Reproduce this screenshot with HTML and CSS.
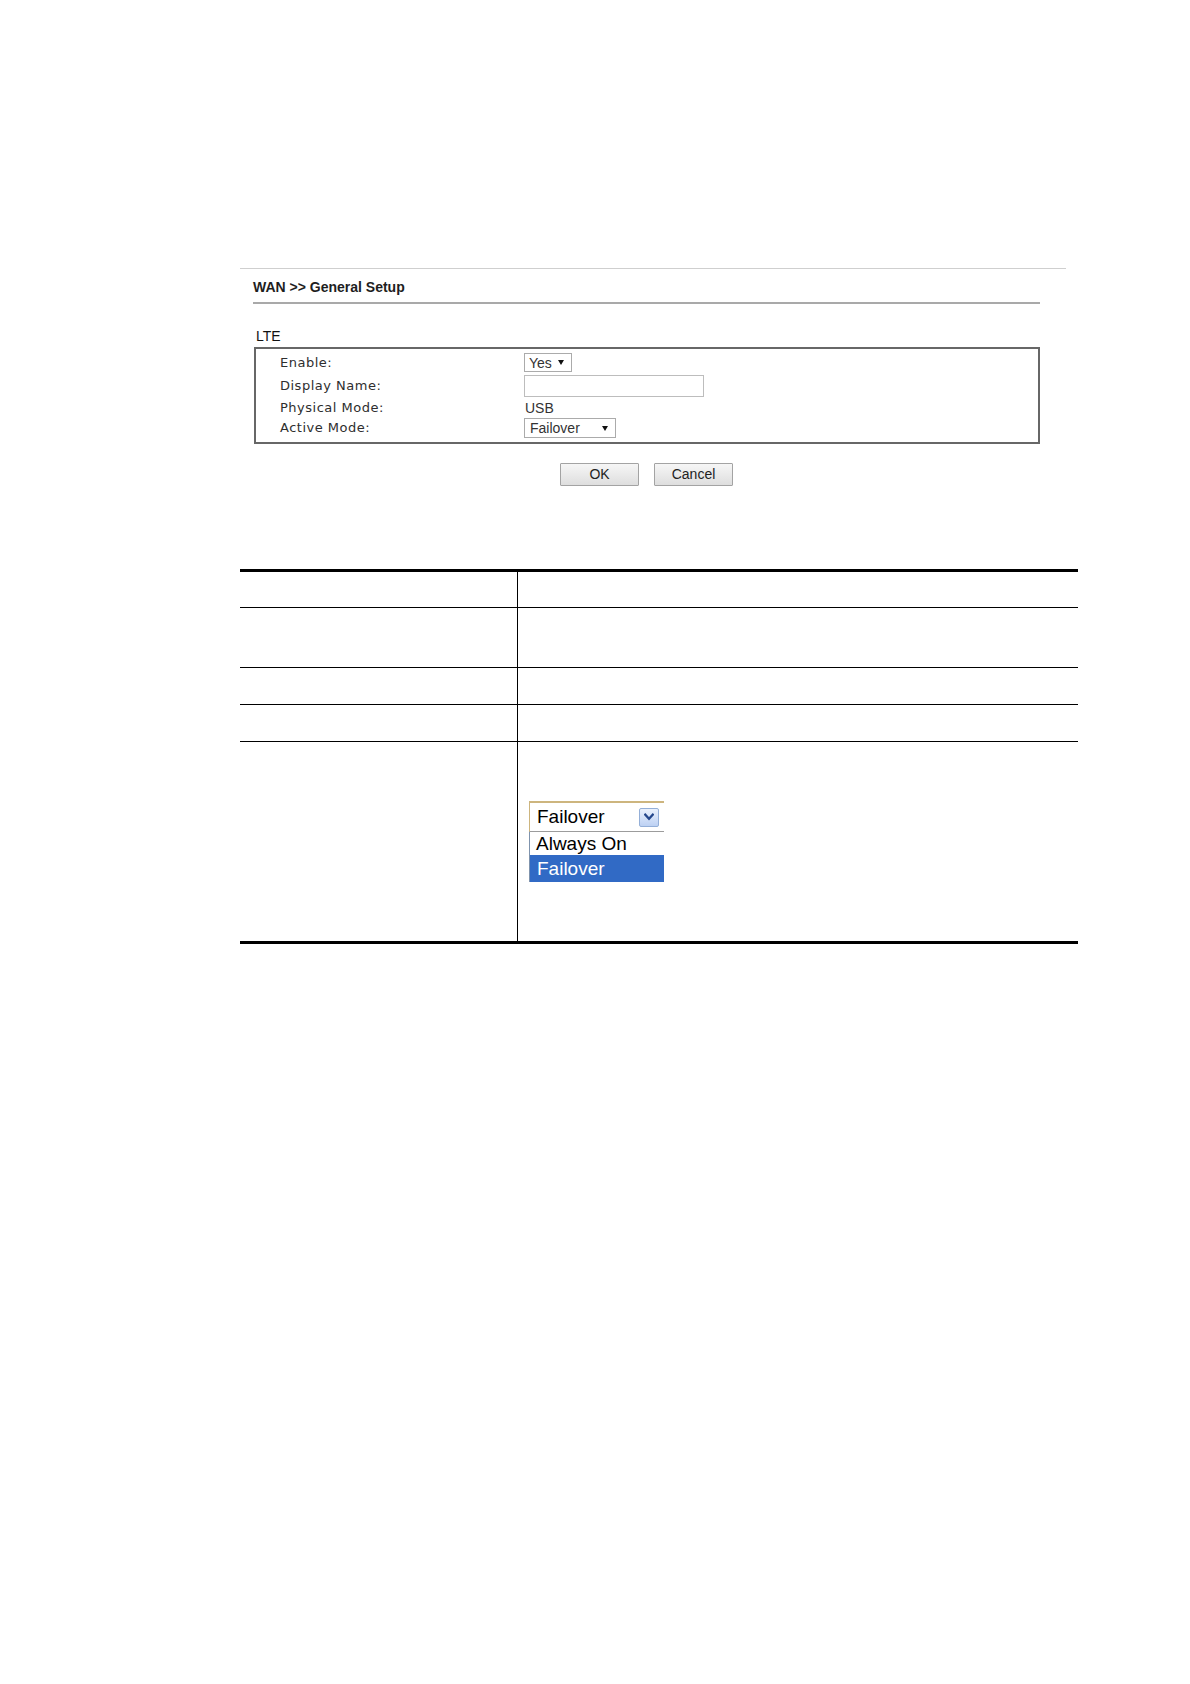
FILE: index.html
```html
<!DOCTYPE html>
<html lang="en">
<head>
<meta charset="utf-8">
<title>WAN General Setup - LTE</title>
<link rel="stylesheet" href="styles.css">
</head>
<body>
<div class="page">
  <div class="topline"></div>
  <div class="panel">
    <div class="title">WAN &gt;&gt; General Setup</div>
    <div class="section-label">LTE</div>
    <div class="box">
      <div class="row r1">
        <span class="lbl">Enable:</span>
        <span class="sel sel-yes"><span>Yes</span><i class="tri"></i></span>
      </div>
      <div class="row r2">
        <span class="lbl">Display Name:</span>
        <span class="txt-input"></span>
      </div>
      <div class="row r3">
        <span class="lbl">Physical Mode:</span>
        <span class="val">USB</span>
      </div>
      <div class="row r4">
        <span class="lbl">Active Mode:</span>
        <span class="sel sel-fail"><span>Failover</span><i class="tri"></i></span>
      </div>
    </div>
    <div class="buttons">
      <button class="btn" type="button">OK</button>
      <button class="btn" type="button">Cancel</button>
    </div>
  </div>

  <div class="ref-table">
    <div class="trow h1"><div class="cell-l"></div><div class="cell-r"></div></div>
    <div class="trow h2"><div class="cell-l"></div><div class="cell-r"></div></div>
    <div class="trow h3"><div class="cell-l"></div><div class="cell-r"></div></div>
    <div class="trow h4"><div class="cell-l"></div><div class="cell-r"></div></div>
    <div class="trow h5">
      <div class="cell-l"></div>
      <div class="cell-r dd-cell">
        <div class="dd">
          <div class="dd-sel">
            <span>Failover</span>
            <span class="dd-btn">
              <svg width="10" height="8" viewBox="0 0 10 8"><path d="M1.2 1.6 L5 5.8 L8.8 1.6" fill="none" stroke="#24478c" stroke-width="2.2" stroke-linecap="square"/></svg>
            </span>
          </div>
          <div class="dd-list">
            <div class="dd-opt">Always On</div>
            <div class="dd-opt hl">Failover</div>
          </div>
        </div>
      </div>
    </div>
  </div>
</div>
</body>
</html>
```

FILE: styles.css
```css
html, body {
  margin: 0;
  padding: 0;
  background: #ffffff;
}

body {
  font-family: "Liberation Sans", Arial, sans-serif;
  color: #222;
}

.page {
  width: 1190px;
  min-height: 1684px;
  padding-top: 268px;
  box-sizing: border-box;
}

.topline {
  margin-left: 240px;
  width: 826px;
  height: 0;
  border-top: 1px solid #cfcfcf;
}

.panel {
  margin-left: 253px;
  width: 787px;
}

.title {
  padding: 10px 0 7px 0;
  line-height: 16px;
  font-size: 14px;
  font-weight: bold;
  color: #1e1e1e;
  border-bottom: 2px solid #a9a9a9;
}

.section-label {
  margin-top: 24px;
  padding-left: 3px;
  line-height: 16px;
  font-size: 14px;
  color: #111;
}

.box {
  margin-top: 3px;
  margin-left: 1px;
  width: 786px;
  box-sizing: border-box;
  border: 2px solid #676767;
  padding: 4px 0 4px 24px;
}

.row {
  display: grid;
  grid-template-columns: 244px auto;
  justify-content: start;
  align-items: center;
}

.r1 { height: 19px; }
.r2 { height: 22px; margin-top: 3px; }
.r3 { height: 21px; }
.r4 { height: 20px; }

.lbl {
  font-family: "DejaVu Sans", Verdana, sans-serif;
  font-size: 13px;
  letter-spacing: 0.5px;
  color: #2e2e2e;
  line-height: 16px;
}

.sel {
  display: flex;
  align-items: center;
  justify-content: space-between;
  box-sizing: border-box;
  border: 1px solid #ababab;
  background: #fff;
  font-size: 14px;
  color: #333;
  line-height: 16px;
}

.sel-yes {
  width: 48px;
  height: 19px;
  padding: 0 7px 0 4px;
}

.sel-fail {
  width: 92px;
  height: 20px;
  padding: 0 7px 0 5px;
}

.tri {
  display: block;
  width: 0;
  height: 0;
  border-left: 3px solid transparent;
  border-right: 3px solid transparent;
  border-top: 5px solid #111;
}

.txt-input {
  display: block;
  width: 180px;
  height: 22px;
  box-sizing: border-box;
  border: 1px solid #bdbdbd;
  background: #fff;
}

.val {
  font-size: 14px;
  color: #333;
  padding-left: 1px;
  line-height: 16px;
}

.buttons {
  margin-top: 19px;
  display: flex;
  justify-content: center;
  gap: 15px;
}

.btn {
  width: 79px;
  height: 23px;
  box-sizing: border-box;
  margin: 0;
  padding: 0;
  border: 1px solid #a3a3a3;
  border-radius: 1px;
  background: linear-gradient(#f6f6f6, #dedede);
  font-family: "Liberation Sans", Arial, sans-serif;
  font-size: 14px;
  color: #222;
  line-height: 21px;
}

.ref-table {
  margin-top: 83px;
  margin-left: 240px;
  width: 838px;
  border-top: 3px solid #000;
  border-bottom: 3px solid #000;
}

.trow {
  display: grid;
  grid-template-columns: 278px 1fr;
}

.trow + .trow {
  border-top: 1px solid #000;
}

.cell-l {
  border-right: 1px solid #000;
}

.h1 { height: 35px; }
.h2 { height: 59px; }
.h3 { height: 36px; }
.h4 { height: 36px; }
.h5 { height: 199px; }

.dd-cell {
  padding: 59px 0 0 11px;
}

.dd {
  width: 135px;
  font-size: 19px;
  color: #000;
}

.dd-sel {
  height: 28px;
  border-top: 2px solid #cdb57e;
  border-left: 1px solid #cdb57e;
  border-bottom: 1px solid #9c9c9c;
  background: #fff;
  display: flex;
  align-items: center;
  justify-content: space-between;
  padding: 0 5px 0 7px;
  line-height: 22px;
}

.dd-btn {
  width: 20px;
  height: 19px;
  box-sizing: border-box;
  border: 1px solid #94afd8;
  border-radius: 2px;
  background: linear-gradient(#eaf1fd, #bdd1f3);
  display: flex;
  align-items: center;
  justify-content: center;
}

.dd-btn svg {
  display: block;
}

.dd-list {
  border-left: 1px solid #7f93ad;
}

.dd-opt {
  height: 23px;
  line-height: 23px;
  padding-left: 6px;
  background: #fff;
}

.dd-opt.hl {
  height: 27px;
  line-height: 27px;
  padding-left: 7px;
  background: #316ac5;
  color: #fff;
}
```
